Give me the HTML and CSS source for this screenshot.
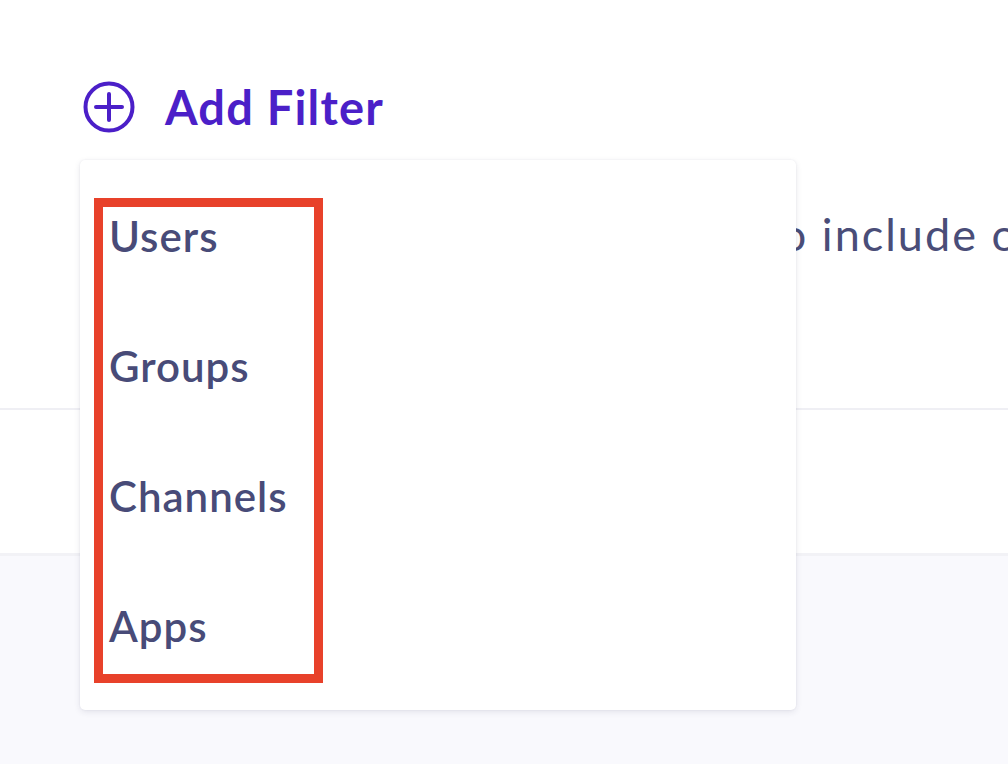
FILE: index.html
```html
<!DOCTYPE html>
<html lang="en">
<head>
<meta charset="utf-8">
<title>Add Filter</title>
<link rel="stylesheet" href="styles.css">
</head>
<body>
<div class="page">
  <section class="filters">
    <div class="add-filter">
      <svg class="add-icon" width="54" height="54" viewBox="0 0 54 54" aria-hidden="true">
        <circle cx="27" cy="27" r="23.5" fill="none" stroke="currentColor" stroke-width="4"/>
        <path d="M27 14v26M14 27h26" fill="none" stroke="currentColor" stroke-width="4" stroke-linecap="round"/>
      </svg>
      <span class="add-label">Add Filter</span>
    </div>
    <p class="hint">Use these filters to include or exclude</p>
  </section>
  <section class="middle"></section>
  <div class="dropdown">
    <ul class="menu">
      <li>Users</li>
      <li>Groups</li>
      <li>Channels</li>
      <li>Apps</li>
    </ul>
  </div>
</div>
</body>
</html>
```
FILE: styles.css
```css
html, body {
  margin: 0;
  padding: 0;
}
body {
  background: #f9f9fd;
  font-family: Lato, "Open Sans", sans-serif;
  overflow: hidden;
  width: 1008px;
  height: 764px;
}
.page {
  position: relative;
  width: 1008px;
  height: 764px;
  overflow: hidden;
}
.filters {
  background: #fff;
  height: 410px;
  border-bottom: 2px solid #efeff4;
  box-sizing: border-box;
  padding: 80px 0 0 82px;
}
.middle {
  background: #fff;
  height: 146px;
  border-bottom: 3px solid #f2f2f6;
  box-sizing: border-box;
}
.add-filter {
  display: flex;
  align-items: center;
  gap: 29px;
  color: #4b1fc8;
  height: 54px;
}
.add-icon {
  display: block;
  flex: none;
}
.add-label {
  font-size: 47px;
  font-weight: 700;
  letter-spacing: 1.2px;
  line-height: 1;
}
.hint {
  margin: 73px 0 0 314px;
  font-size: 45px;
  letter-spacing: 2px;
  color: #4a4d78;
  white-space: nowrap;
  line-height: 1.2;
}
.dropdown {
  position: absolute;
  left: 80px;
  top: 160px;
  width: 716px;
  height: 550px;
  background: #fff;
  border-radius: 5px;
  box-shadow: 0 2px 6px rgba(40, 40, 80, 0.10), 0 0 2px rgba(40, 40, 80, 0.08);
  box-sizing: border-box;
  padding: 38px 0 0 14px;
}
.menu {
  list-style: none;
  margin: 0;
  padding: 4px 0 0 6px;
  width: 229px;
  height: 485px;
  box-sizing: border-box;
  border: 9px solid #e8412a;
  display: flex;
  flex-direction: column;
  gap: 80px;
}
.menu li {
  font-size: 42px;
  font-weight: 600;
  letter-spacing: 1px;
  color: #484b78;
  line-height: 50px;
  height: 50px;
}
```
